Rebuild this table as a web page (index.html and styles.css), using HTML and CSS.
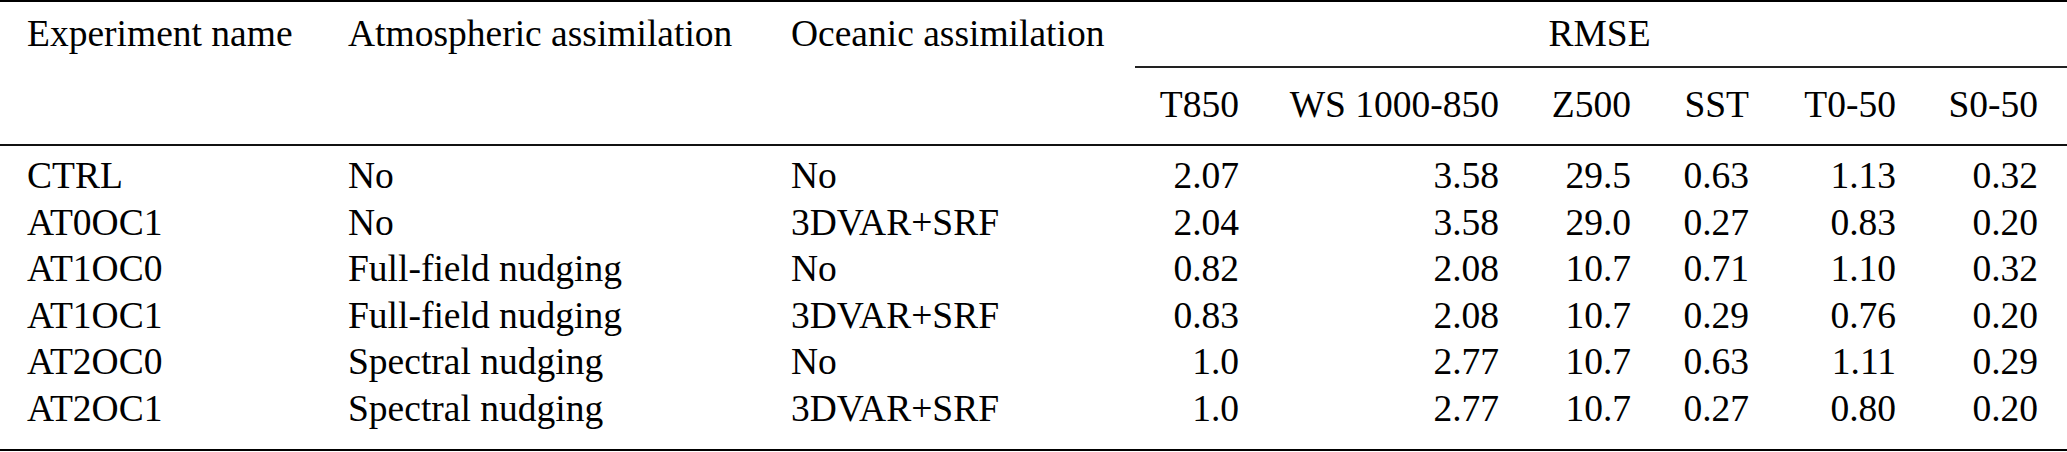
FILE: index.html
```html
<!DOCTYPE html>
<html lang="en">
<head>
<meta charset="utf-8">
<title>RMSE table</title>
<link rel="stylesheet" href="styles.css">
</head>
<body class="page">
<div class="table">
  <div class="thead">
    <div class="cell txt first span-rows">Experiment name</div>
    <div class="cell txt span-rows">Atmospheric assimilation</div>
    <div class="cell txt span-rows">Oceanic assimilation</div>
    <div class="cell group">RMSE</div>
    <div class="cell num sub">T850</div>
    <div class="cell num sub">WS 1000-850</div>
    <div class="cell num sub">Z500</div>
    <div class="cell num sub">SST</div>
    <div class="cell num sub">T0-50</div>
    <div class="cell num sub last">S0-50</div>
  </div>
  <div class="tbody">
    <div class="cell txt first">CTRL</div><div class="cell txt">No</div><div class="cell txt">No</div>
    <div class="cell num">2.07</div><div class="cell num">3.58</div><div class="cell num">29.5</div><div class="cell num">0.63</div><div class="cell num">1.13</div><div class="cell num last">0.32</div>

    <div class="cell txt first">AT0OC1</div><div class="cell txt">No</div><div class="cell txt">3DVAR+SRF</div>
    <div class="cell num">2.04</div><div class="cell num">3.58</div><div class="cell num">29.0</div><div class="cell num">0.27</div><div class="cell num">0.83</div><div class="cell num last">0.20</div>

    <div class="cell txt first">AT1OC0</div><div class="cell txt">Full-field nudging</div><div class="cell txt">No</div>
    <div class="cell num">0.82</div><div class="cell num">2.08</div><div class="cell num">10.7</div><div class="cell num">0.71</div><div class="cell num">1.10</div><div class="cell num last">0.32</div>

    <div class="cell txt first">AT1OC1</div><div class="cell txt">Full-field nudging</div><div class="cell txt">3DVAR+SRF</div>
    <div class="cell num">0.83</div><div class="cell num">2.08</div><div class="cell num">10.7</div><div class="cell num">0.29</div><div class="cell num">0.76</div><div class="cell num last">0.20</div>

    <div class="cell txt first">AT2OC0</div><div class="cell txt">Spectral nudging</div><div class="cell txt">No</div>
    <div class="cell num">1.0</div><div class="cell num">2.77</div><div class="cell num">10.7</div><div class="cell num">0.63</div><div class="cell num">1.11</div><div class="cell num last">0.29</div>

    <div class="cell txt first">AT2OC1</div><div class="cell txt">Spectral nudging</div><div class="cell txt">3DVAR+SRF</div>
    <div class="cell num">1.0</div><div class="cell num">2.77</div><div class="cell num">10.7</div><div class="cell num">0.27</div><div class="cell num">0.80</div><div class="cell num last">0.20</div>
  </div>
</div>
</body>
</html>
```

FILE: styles.css
```css
.page {
  margin: 0;
  padding: 0;
  background: #ffffff;
}

.table {
  width: 2067px;
  font-family: "Liberation Serif", "Times New Roman", serif;
  font-size: 37.5px;
  line-height: 46.5px;
  color: #000;
  border-top: 2px solid #000;
  border-bottom: 2px solid #000;
}

.thead,
.tbody {
  display: grid;
  grid-template-columns: 322px 443px 370px 130px 260px 132px 118px 147px 145px;
}

.thead {
  border-bottom: 2px solid #111;
}

.tbody {
  padding-top: 7.5px;
  padding-bottom: 16.6px;
}

.cell {
  white-space: nowrap;
}

.txt {
  text-align: left;
  padding-left: 26px;
}

.txt.first {
  padding-left: 27px;
}

.num {
  text-align: right;
  padding-right: 26px;
}

.num.last {
  padding-right: 29px;
}

.span-rows {
  grid-row: span 2;
  padding-top: 9px;
}

.group {
  grid-column: span 6;
  text-align: center;
  padding-top: 9px;
  padding-bottom: 8.5px;
  padding-left: 26px;
  padding-right: 29px;
  border-bottom: 2px solid #222;
}

.sub {
  padding-top: 14.2px;
  padding-bottom: 15.3px;
}
```
